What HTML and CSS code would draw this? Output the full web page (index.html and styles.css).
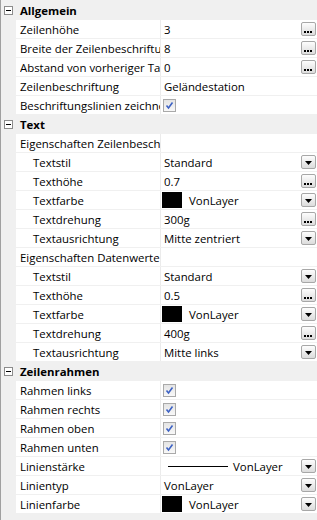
FILE: index.html
```html
<!DOCTYPE html>
<html lang="de">
<head>
    <meta charset="UTF-8">
    <meta name="viewport" content="width=device-width, initial-scale=1.0">
    <title>Eigenschaften</title>
    <link rel="stylesheet" href="styles.css">
</head>
<body>
    <div class="grid">
        <!-- Allgemein -->
        <div class="cat"><span class="toggle"></span>Allgemein</div>
        <div class="row">
            <div class="name">Zeilenhöhe</div>
            <div class="value"><span>3</span><span class="btn more"><svg width="9" height="2"><rect x="0" y="0" width="2" height="2"/><rect x="3" y="0" width="2" height="2"/><rect x="6" y="0" width="2" height="2"/></svg></span></div>
        </div>
        <div class="row">
            <div class="name"><span class="label">Breite der Zeilenbeschriftung</span></div>
            <div class="value"><span>8</span><span class="btn more"><svg width="9" height="2"><rect x="0" y="0" width="2" height="2"/><rect x="3" y="0" width="2" height="2"/><rect x="6" y="0" width="2" height="2"/></svg></span></div>
        </div>
        <div class="row">
            <div class="name"><span class="label">Abstand von vorheriger Tabelle</span></div>
            <div class="value"><span>0</span><span class="btn more"><svg width="9" height="2"><rect x="0" y="0" width="2" height="2"/><rect x="3" y="0" width="2" height="2"/><rect x="6" y="0" width="2" height="2"/></svg></span></div>
        </div>
        <div class="row">
            <div class="name">Zeilenbeschriftung</div>
            <div class="value"><span>Geländestation</span></div>
        </div>
        <div class="row">
            <div class="name"><span class="label">Beschriftungslinien zeichnen</span></div>
            <div class="value"><span class="check"><svg width="9" height="9" viewBox="0 0 9 9"><path d="M1.5 4.5 L3.5 7 L7.5 1.5" fill="none" stroke="#3d62c4" stroke-width="1.6"/></svg></span></div>
        </div>

        <!-- Text -->
        <div class="cat"><span class="toggle"></span>Text</div>
        <div class="row">
            <div class="name"><span class="label">Eigenschaften Zeilenbeschriftung</span></div>
            <div class="value"></div>
        </div>
        <div class="row">
            <div class="name sub">Textstil</div>
            <div class="value"><span>Standard</span><span class="btn drop"><svg width="7" height="4"><path d="M0 0 H7 L3.5 4 Z"/></svg></span></div>
        </div>
        <div class="row">
            <div class="name sub">Texthöhe</div>
            <div class="value"><span>0.7</span><span class="btn more"><svg width="9" height="2"><rect x="0" y="0" width="2" height="2"/><rect x="3" y="0" width="2" height="2"/><rect x="6" y="0" width="2" height="2"/></svg></span></div>
        </div>
        <div class="row">
            <div class="name sub">Textfarbe</div>
            <div class="value"><span class="swatch"></span><span>VonLayer</span><span class="btn drop"><svg width="7" height="4"><path d="M0 0 H7 L3.5 4 Z"/></svg></span></div>
        </div>
        <div class="row">
            <div class="name sub">Textdrehung</div>
            <div class="value"><span>300g</span><span class="btn more"><svg width="9" height="2"><rect x="0" y="0" width="2" height="2"/><rect x="3" y="0" width="2" height="2"/><rect x="6" y="0" width="2" height="2"/></svg></span></div>
        </div>
        <div class="row">
            <div class="name sub">Textausrichtung</div>
            <div class="value"><span>Mitte zentriert</span><span class="btn drop"><svg width="7" height="4"><path d="M0 0 H7 L3.5 4 Z"/></svg></span></div>
        </div>
        <div class="row">
            <div class="name">Eigenschaften Datenwerte</div>
            <div class="value"></div>
        </div>
        <div class="row">
            <div class="name sub">Textstil</div>
            <div class="value"><span>Standard</span><span class="btn drop"><svg width="7" height="4"><path d="M0 0 H7 L3.5 4 Z"/></svg></span></div>
        </div>
        <div class="row">
            <div class="name sub">Texthöhe</div>
            <div class="value"><span>0.5</span><span class="btn more"><svg width="9" height="2"><rect x="0" y="0" width="2" height="2"/><rect x="3" y="0" width="2" height="2"/><rect x="6" y="0" width="2" height="2"/></svg></span></div>
        </div>
        <div class="row">
            <div class="name sub">Textfarbe</div>
            <div class="value"><span class="swatch"></span><span>VonLayer</span><span class="btn drop"><svg width="7" height="4"><path d="M0 0 H7 L3.5 4 Z"/></svg></span></div>
        </div>
        <div class="row">
            <div class="name sub">Textdrehung</div>
            <div class="value"><span>400g</span><span class="btn more"><svg width="9" height="2"><rect x="0" y="0" width="2" height="2"/><rect x="3" y="0" width="2" height="2"/><rect x="6" y="0" width="2" height="2"/></svg></span></div>
        </div>
        <div class="row">
            <div class="name sub">Textausrichtung</div>
            <div class="value"><span>Mitte links</span><span class="btn drop"><svg width="7" height="4"><path d="M0 0 H7 L3.5 4 Z"/></svg></span></div>
        </div>

        <!-- Zeilenrahmen -->
        <div class="cat"><span class="toggle"></span>Zeilenrahmen</div>
        <div class="row">
            <div class="name">Rahmen links</div>
            <div class="value"><span class="check"><svg width="9" height="9" viewBox="0 0 9 9"><path d="M1.5 4.5 L3.5 7 L7.5 1.5" fill="none" stroke="#3d62c4" stroke-width="1.6"/></svg></span></div>
        </div>
        <div class="row">
            <div class="name">Rahmen rechts</div>
            <div class="value"><span class="check"><svg width="9" height="9" viewBox="0 0 9 9"><path d="M1.5 4.5 L3.5 7 L7.5 1.5" fill="none" stroke="#3d62c4" stroke-width="1.6"/></svg></span></div>
        </div>
        <div class="row">
            <div class="name">Rahmen oben</div>
            <div class="value"><span class="check"><svg width="9" height="9" viewBox="0 0 9 9"><path d="M1.5 4.5 L3.5 7 L7.5 1.5" fill="none" stroke="#3d62c4" stroke-width="1.6"/></svg></span></div>
        </div>
        <div class="row">
            <div class="name">Rahmen unten</div>
            <div class="value"><span class="check"><svg width="9" height="9" viewBox="0 0 9 9"><path d="M1.5 4.5 L3.5 7 L7.5 1.5" fill="none" stroke="#3d62c4" stroke-width="1.6"/></svg></span></div>
        </div>
        <div class="row">
            <div class="name">Linienstärke</div>
            <div class="value"><span class="line"></span><span>VonLayer</span><span class="btn drop"><svg width="7" height="4"><path d="M0 0 H7 L3.5 4 Z"/></svg></span></div>
        </div>
        <div class="row">
            <div class="name">Linientyp</div>
            <div class="value"><span>VonLayer</span><span class="btn drop"><svg width="7" height="4"><path d="M0 0 H7 L3.5 4 Z"/></svg></span></div>
        </div>
        <div class="row">
            <div class="name">Linienfarbe</div>
            <div class="value"><span class="swatch"></span><span>VonLayer</span><span class="btn drop"><svg width="7" height="4"><path d="M0 0 H7 L3.5 4 Z"/></svg></span></div>
        </div>
    </div>
</body>
</html>
```

FILE: styles.css
```css
:root {
    --panel-color: #f0f0f0;
    --line-color: #ebebeb;
    --edge-color: #a0a0a0;
}
body {
    margin: 0;
    padding: 0;
    background: var(--panel-color);
    font-family: 'Open Sans', 'Liberation Sans', sans-serif;
    font-size: 11.4px;
    color: #000;
}
.grid {
    display: flex;
    flex-direction: column;
    gap: 1px;
    padding-top: 1px;
    height: 520px;
    box-sizing: border-box;
    border-left: 1px solid var(--edge-color);
    background: var(--panel-color);
}
.cat {
    height: 18px;
    display: flex;
    align-items: center;
    font-weight: bold;
    background: var(--panel-color);
}
.toggle {
    width: 9px;
    height: 9px;
    box-sizing: border-box;
    margin: 0 7px 0 3px;
    border: 1px solid #8c8c8c;
    background: #fff;
    position: relative;
}
.toggle::after {
    content: '';
    position: absolute;
    left: 1px;
    top: 3px;
    width: 5px;
    height: 1px;
    background: #000;
}
.row {
    display: grid;
    grid-template-columns: 144px 1fr;
    column-gap: 1px;
    height: 18px;
    margin-left: 15px;
    background: var(--line-color);
}
.name,
.value {
    background: #fff;
    display: flex;
    align-items: center;
    white-space: nowrap;
    overflow: hidden;
    min-width: 0;
}
.name {
    padding-left: 4px;
}
.name.sub {
    padding-left: 17px;
}
/* long labels are clipped by the column, as in the grid control */
.label {
    overflow: hidden;
    text-overflow: clip;
    min-width: 0;
}
.value {
    padding: 0 1px 0 3px;
}
.btn {
    width: 15px;
    height: 14px;
    box-sizing: border-box;
    margin-left: auto;
    flex-shrink: 0;
    display: flex;
    justify-content: center;
    border: 1px solid #a7a7a7;
    border-radius: 2px;
    background: linear-gradient(#fdfdfd, #dcdcdc);
}
.btn svg {
    fill: #000;
}
.btn.more {
    align-items: flex-end;
    padding-bottom: 2px;
}
.btn.drop {
    align-items: center;
    padding-top: 1px;
}
.swatch {
    width: 20px;
    height: 16px;
    margin: 0 7px 0 -2px;
    background: #000;
    flex-shrink: 0;
}
.check {
    width: 13px;
    height: 13px;
    box-sizing: border-box;
    margin-left: -1px;
    display: flex;
    align-items: center;
    justify-content: center;
    border: 1px solid #a9a9a9;
    background: linear-gradient(#e4e4e4, #f8f8f8);
}
.line {
    width: 60px;
    height: 1px;
    margin: 0 5px 0 4px;
    background: #000;
}
```
